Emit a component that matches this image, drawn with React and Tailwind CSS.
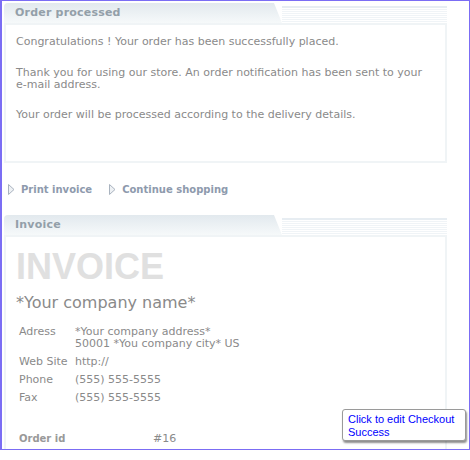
import React from 'react';

const TabHeader = ({ title }) => (
    <div className="flex h-[20px] items-stretch">
        <div className="relative w-[278px] rounded-tl-[4px] bg-gradient-to-b from-[#e2e9ee] to-[#f6f9fa] [clip-path:polygon(0_0,270px_0,278px_100%,0_100%)]">
            <span className="absolute left-[11px] top-[3px] text-[11px] font-bold tracking-[0.2px] text-[#939fa9] leading-[14px]">
                {title}
            </span>
        </div>
        <div className="flex-1 mt-[3px] bg-[repeating-linear-gradient(to_bottom,#ffffff_0px,#ffffff_1px,#f0f4f7_1px,#f0f4f7_2px)]">
            <div className="h-[2px] bg-[#e7edf2]" />
        </div>
    </div>
);

const Box = ({ children, className = '' }) => (
    <div className={`border-2 border-[#f0f4f6] bg-white ${className}`}>{children}</div>
);

const Arrow = () => (
    <svg width="7" height="11" viewBox="0 0 7 11" className="mr-[6px]">
        <path d="M0.5 0.5 L6 5.5 L0.5 10.5 Z" fill="#eef1f4" stroke="#a9b3bf" strokeWidth="1" />
    </svg>
);

const rows = [
    { label: 'Adress', value: ['*Your company address*', '50001 *You company city* US'] },
    { label: 'Web Site', value: ['http://'] },
    { label: 'Phone', value: ['(555) 555-5555'] },
    { label: 'Fax', value: ['(555) 555-5555'] }
];

export default function App() {
    return (
        <div
            className="relative w-[470px] h-[450px] overflow-hidden bg-white border border-l-2 border-[#7b6df4]"
            style={{ fontFamily: '"DejaVu Sans", Verdana, sans-serif' }}
        >
            <div className="w-[443px] ml-[2px] pt-[2px]">
                {/* Order processed */}
                <TabHeader title="Order processed" />
                <Box className="h-[140px] px-[10px] pt-[11px] text-[11px] leading-[12px] text-[#8a8a8a]">
                    <p>Congratulations ! Your order has been successfully placed.</p>
                    <p className="mt-[19px]">
                        Thank you for using our store. An order notification has been sent to your e-mail address.
                    </p>
                    <p className="mt-[18px]">Your order will be processed according to the delivery details.</p>
                </Box>

                {/* Links */}
                <div className="flex items-center h-[52px] pl-[4px] text-[10px] font-bold text-[#8e9aad]">
                    <span className="flex items-center">
                        <Arrow />
                        Print invoice
                    </span>
                    <span className="flex items-center ml-[17px]">
                        <Arrow />
                        Continue shopping
                    </span>
                </div>

                {/* Invoice */}
                <TabHeader title="Invoice" />
                <Box className="h-[240px] px-[10px] pt-[10px] text-[#8a8a8a]">
                    <div
                        className="text-[36px] font-bold leading-[40px] text-[#e0e0e0]"
                        style={{ fontFamily: '"Liberation Sans", Arial, sans-serif' }}
                    >
                        INVOICE
                    </div>
                    <div className="mt-[7px] text-[16px] leading-[18px] text-[#8a8a8a]">*Your company name*</div>
                    <table className="mt-[14px] ml-[3px] text-[11px] leading-[12px] text-[#8a8a8a]">
                        <tbody>
                            {rows.map((r) => (
                                <tr key={r.label} className="align-top">
                                    <td className="w-[56px] pb-[6px]">{r.label}</td>
                                    <td className="pb-[6px]">
                                        {r.value.map((v) => (
                                            <div key={v}>{v}</div>
                                        ))}
                                    </td>
                                </tr>
                            ))}
                        </tbody>
                    </table>
                    <div className="flex mt-[23px] ml-[3px] text-[10px] leading-[12px]">
                        <span className="w-[134px] font-bold text-[#999]">Order id</span>
                        <span className="text-[11px]">#16</span>
                    </div>
                </Box>
            </div>

            {/* Edit tooltip */}
            <div
                className="absolute left-[340px] top-[408px] w-[124px] h-[32px] px-[5px] pt-[3px] bg-white border border-[#9a9a9a] rounded-[3px] shadow-[1px_2px_2px_rgba(0,0,0,0.45)] text-[11px] leading-[13px] text-[#0000ff]"
                style={{ fontFamily: '"Liberation Sans", Arial, sans-serif' }}
            >
                Click to edit Checkout Success
            </div>
        </div>
    );
}
